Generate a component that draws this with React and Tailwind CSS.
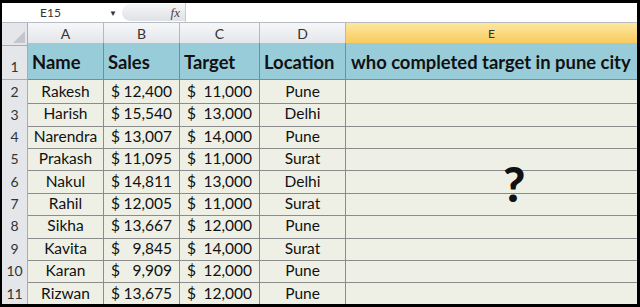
import React from 'react';

const rows = [
  ['Rakesh', '12,400', '11,000', 'Pune'],
  ['Harish', '15,540', '13,000', 'Delhi'],
  ['Narendra', '13,007', '14,000', 'Pune'],
  ['Prakash', '11,095', '11,000', 'Surat'],
  ['Nakul', '14,811', '13,000', 'Delhi'],
  ['Rahil', '12,005', '11,000', 'Surat'],
  ['Sikha', '13,667', '12,000', 'Pune'],
  ['Kavita', '9,845', '14,000', 'Surat'],
  ['Karan', '9,909', '12,000', 'Pune'],
  ['Rizwan', '13,675', '12,000', 'Pune'],
];

const cols = 'grid grid-cols-[26px_76px_76px_80px_86px_291px]';

const Money = ({ v }) => (
  <div className="flex justify-between items-center pl-[7px] pr-[7px] border-r border-b border-[#8c8c8c]">
    <span>$</span>
    <span>{v}</span>
  </div>
);

const App = () => {
  return (
    <div className="w-[640px] h-[307px] bg-black pt-[3px] pl-[2px] pr-[3px] pb-[3px] overflow-hidden" style={{ fontFamily: 'Lato, "Open Sans", sans-serif' }}>
      <div className="w-[635px] h-[301px] bg-[#eef0e6] overflow-hidden">
        {/* formula bar */}
        <div className="flex h-[20px] bg-white border-b border-[#b9bcc2] items-center text-[12px] text-[#333]">
          <div className="w-[120px] flex items-center">
            <span className="ml-[38px]">E15</span>
            <span className="ml-auto mr-[5px] text-[8px]">▼</span>
          </div>
          <div className="w-[63px] h-[17px] rounded-l-full bg-gradient-to-b from-[#f4f5f7] to-[#dfe2e6] flex items-center justify-end pr-[5px]">
            <span className="italic text-[13px] text-[#444]" style={{ fontFamily: '"Liberation Serif", serif' }}>fx</span>
          </div>
          <div className="flex-1 h-full border-l border-[#c8cbd0] bg-white" />
        </div>
        {/* column headers */}
        <div className={`${cols} h-[20px] text-[14px] text-[#333]`}>
          <div className="bg-[#e4e6ea] border-r border-b border-[#a9adb3] relative">
            <div className="absolute right-[2px] bottom-[2px] w-0 h-0 border-l-[12px] border-l-transparent border-b-[12px] border-b-[#c3c6cb]" />
          </div>
          {['A', 'B', 'C', 'D'].map((c) => (
            <div key={c} className="bg-gradient-to-b from-[#f6f7f9] to-[#e3e5e9] border-r border-[#b6b9bf] border-b-2 border-b-[#e2cfe6] flex items-center justify-center">{c}</div>
          ))}
          <div className="bg-gradient-to-b from-[#fde7a0] to-[#f8c958] border-b-2 border-b-[#e9b64a] flex items-center justify-center text-[12px]">E</div>
        </div>
        {/* header row */}
        <div className={`${cols} h-[37px] text-[18.4px] font-bold text-[#111]`}>
          <div className="bg-[#e4e6ea] border-r border-b border-[#a9adb3] flex items-end justify-center pb-[2px] font-normal text-[14px] text-[#333]">1</div>
          {['Name', 'Sales', 'Target', 'Location'].map((h) => (
            <div key={h} className="bg-[#98ccd9] border-r border-b border-[#7d8a8f] flex items-center pl-[4px] pt-[3px]">{h}</div>
          ))}
          <div className="bg-[#98ccd9] border-b border-[#7d8a8f] flex items-center pl-[5px] pt-[3px] whitespace-nowrap">who completed target in pune city</div>
        </div>
        {/* data rows */}
        <div className="relative">
          {rows.map((r, i) => (
            <div key={i} className={`${cols} h-[22.4px] text-[15.5px] text-[#111]`}>
              <div className="bg-[#e4e6ea] border-r border-b border-[#a9adb3] flex items-center justify-center text-[14px] text-[#333]">{i + 2}</div>
              <div className="border-r border-b border-[#8c8c8c] flex items-center justify-center">{r[0]}</div>
              <Money v={r[1]} />
              <Money v={r[2]} />
              <div className="border-r border-b border-[#8c8c8c] flex items-center justify-center">{r[3]}</div>
              <div className="border-b border-[#8c8c8c]" />
            </div>
          ))}
          <span className="absolute left-[501px] top-[80px] text-[48px] font-black text-[#111] leading-none">?</span>
        </div>
      </div>
    </div>
  );
};

export default App;
